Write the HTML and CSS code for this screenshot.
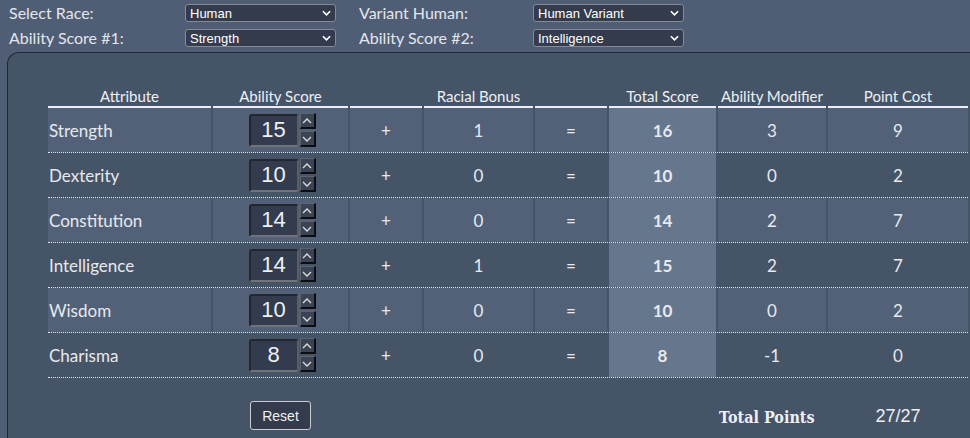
FILE: index.html
```html
<!DOCTYPE html>
<html>
<head>
<meta charset="utf-8">
<link rel="stylesheet" href="styles.css">
</head>
<body>
<div class="top">
  <div class="lbl">Select Race:</div>
  <div class="cell"><div class="select"><span>Human</span><svg class="chev" viewBox="0 0 10 6" width="10" height="6"><path d="M1 1 L5 5 L9 1" fill="none" stroke="#fff" stroke-width="1.8"/></svg></div></div>
  <div class="lbl">Variant Human:</div>
  <div class="cell"><div class="select"><span>Human Variant</span><svg class="chev" viewBox="0 0 10 6" width="10" height="6"><path d="M1 1 L5 5 L9 1" fill="none" stroke="#fff" stroke-width="1.8"/></svg></div></div>
  <div class="lbl">Ability Score #1:</div>
  <div class="cell"><div class="select"><span>Strength</span><svg class="chev" viewBox="0 0 10 6" width="10" height="6"><path d="M1 1 L5 5 L9 1" fill="none" stroke="#fff" stroke-width="1.8"/></svg></div></div>
  <div class="lbl">Ability Score #2:</div>
  <div class="cell"><div class="select"><span>Intelligence</span><svg class="chev" viewBox="0 0 10 6" width="10" height="6"><path d="M1 1 L5 5 L9 1" fill="none" stroke="#fff" stroke-width="1.8"/></svg></div></div>
</div>

<div class="panel">
  <div class="grid head">
    <div>Attribute</div><div>Ability Score</div><div></div><div>Racial Bonus</div><div></div><div>Total Score</div><div>Ability Modifier</div><div>Point Cost</div>
  </div>

  <div class="grid row stripe">
    <div class="name">Strength</div>
    <div class="spin"><div class="box">15</div><div class="btns"><div class="b"><svg viewBox="0 0 10 6" width="10" height="6"><path d="M1 5 L5 1 L9 5" fill="none" stroke="#ddd" stroke-width="1.3"/></svg></div><div class="b"><svg viewBox="0 0 10 6" width="10" height="6"><path d="M1 1 L5 5 L9 1" fill="none" stroke="#ddd" stroke-width="1.3"/></svg></div></div></div>
    <div>+</div><div>1</div><div>=</div><div class="tot">16</div><div>3</div><div>9</div>
  </div>

  <div class="grid row">
    <div class="name">Dexterity</div>
    <div class="spin"><div class="box">10</div><div class="btns"><div class="b"><svg viewBox="0 0 10 6" width="10" height="6"><path d="M1 5 L5 1 L9 5" fill="none" stroke="#ddd" stroke-width="1.3"/></svg></div><div class="b"><svg viewBox="0 0 10 6" width="10" height="6"><path d="M1 1 L5 5 L9 1" fill="none" stroke="#ddd" stroke-width="1.3"/></svg></div></div></div>
    <div>+</div><div>0</div><div>=</div><div class="tot">10</div><div>0</div><div>2</div>
  </div>

  <div class="grid row stripe">
    <div class="name">Constitution</div>
    <div class="spin"><div class="box">14</div><div class="btns"><div class="b"><svg viewBox="0 0 10 6" width="10" height="6"><path d="M1 5 L5 1 L9 5" fill="none" stroke="#ddd" stroke-width="1.3"/></svg></div><div class="b"><svg viewBox="0 0 10 6" width="10" height="6"><path d="M1 1 L5 5 L9 1" fill="none" stroke="#ddd" stroke-width="1.3"/></svg></div></div></div>
    <div>+</div><div>0</div><div>=</div><div class="tot">14</div><div>2</div><div>7</div>
  </div>

  <div class="grid row">
    <div class="name">Intelligence</div>
    <div class="spin"><div class="box">14</div><div class="btns"><div class="b"><svg viewBox="0 0 10 6" width="10" height="6"><path d="M1 5 L5 1 L9 5" fill="none" stroke="#ddd" stroke-width="1.3"/></svg></div><div class="b"><svg viewBox="0 0 10 6" width="10" height="6"><path d="M1 1 L5 5 L9 1" fill="none" stroke="#ddd" stroke-width="1.3"/></svg></div></div></div>
    <div>+</div><div>1</div><div>=</div><div class="tot">15</div><div>2</div><div>7</div>
  </div>

  <div class="grid row stripe">
    <div class="name">Wisdom</div>
    <div class="spin"><div class="box">10</div><div class="btns"><div class="b"><svg viewBox="0 0 10 6" width="10" height="6"><path d="M1 5 L5 1 L9 5" fill="none" stroke="#ddd" stroke-width="1.3"/></svg></div><div class="b"><svg viewBox="0 0 10 6" width="10" height="6"><path d="M1 1 L5 5 L9 1" fill="none" stroke="#ddd" stroke-width="1.3"/></svg></div></div></div>
    <div>+</div><div>0</div><div>=</div><div class="tot">10</div><div>0</div><div>2</div>
  </div>

  <div class="grid row">
    <div class="name">Charisma</div>
    <div class="spin"><div class="box">8</div><div class="btns"><div class="b"><svg viewBox="0 0 10 6" width="10" height="6"><path d="M1 5 L5 1 L9 5" fill="none" stroke="#ddd" stroke-width="1.3"/></svg></div><div class="b"><svg viewBox="0 0 10 6" width="10" height="6"><path d="M1 1 L5 5 L9 1" fill="none" stroke="#ddd" stroke-width="1.3"/></svg></div></div></div>
    <div>+</div><div>0</div><div>=</div><div class="tot">8</div><div>-1</div><div>0</div>
  </div>

  <div class="grid foot">
    <div></div>
    <div class="center"><button class="reset">Reset</button></div>
    <div></div><div></div><div></div><div></div>
    <div class="tp">Total Points</div>
    <div class="pts">27/27</div>
  </div>
</div>
</body>
</html>
```

FILE: styles.css
```css
html, body {
  margin: 0;
  padding: 0;
  background: #4f5d75;
  overflow: hidden;
}
body {
  font-family: Lato, "Open Sans", sans-serif;
  color: #e6e9ee;
  height: 438px;
}
.top {
  display: grid;
  grid-template-columns: 176px 174px 174px 151px;
  grid-template-rows: 18px 18px;
  row-gap: 7px;
  padding: 4px 0 0 9px;
}
.lbl {
  font-size: 16px;
  line-height: 18px;
  color: #e3e6eb;
}
.cell {
  display: flex;
}
.select {
  box-sizing: border-box;
  width: 151px;
  height: 18px;
  border: 1px solid #858a93;
  border-radius: 3px;
  background: #333b4d;
  display: flex;
  align-items: center;
  justify-content: space-between;
  padding: 0 4px 0 4px;
  font-family: "Liberation Sans", Arial, sans-serif;
  font-size: 13px;
  color: #fff;
}
.chev {
  display: block;
  width: 9px;
  height: 6px;
}
.panel {
  margin: 5px 0 0 7px;
  border: 1px solid #1e283a;
  border-right: none;
  border-bottom: none;
  border-radius: 12px 0 0 0;
  background: #465468;
  height: 352px;
  padding: 33px 0 0 40px;
}
.grid {
  display: grid;
  grid-template-columns: 163px 135px 72px 109px 72px 107px 108px 140px;
  column-gap: 2px;
  width: 920px;
}
.head > div {
  font-size: 15px;
  line-height: 20px;
  text-align: center;
  border-bottom: 2px solid #eceef1;
  color: #eef0f3;
  white-space: nowrap;
}
.row {
  height: 45px;
  box-sizing: border-box;
  border-bottom: 1px dotted #e3e6ea;
  font-size: 17px;
}
.row > div {
  display: flex;
  align-items: center;
  justify-content: center;
}
.row > .name {
  justify-content: flex-start;
  padding-left: 1px;
}
.stripe > div {
  background: #536178;
}
.row > .tot, .stripe > .tot {
  background: #66778d;
  font-weight: 700;
}
.spin {
  gap: 1px;
  padding-left: 3px;
}
.box {
  box-sizing: border-box;
  width: 50px;
  height: 33px;
  background: #333c4e;
  border: 2px solid #22262d;
  border-bottom-color: #70737a;
  border-right-color: #5a5e66;
  border-radius: 3px;
  display: flex;
  align-items: center;
  justify-content: center;
  font-family: "Liberation Sans", Arial, sans-serif;
  font-size: 22px;
  color: #eef0f3;
}
.btns {
  display: flex;
  flex-direction: column;
  gap: 2px;
}
.b {
  box-sizing: border-box;
  width: 16px;
  height: 16px;
  background: #3b4455;
  border: 1px solid #5c6470;
  border-right: 2px solid #0b0d10;
  border-bottom: 2px solid #0b0d10;
  display: flex;
  align-items: center;
  justify-content: center;
}
.b svg {
  display: block;
}
.foot {
  margin-top: 23px;
  height: 29px;
}
.foot > div {
  display: flex;
  align-items: center;
}
.center {
  justify-content: center;
}
.reset {
  width: 61px;
  height: 29px;
  background: #333b4d;
  border: 1px solid #c9ccd1;
  border-radius: 3px;
  color: #eef0f3;
  font-family: "Liberation Sans", Arial, sans-serif;
  font-size: 14px;
  padding: 0;
}
.tp {
  font-family: "DejaVu Serif", serif;
  font-weight: 700;
  font-size: 16px;
  font-stretch: condensed;
  color: #eef0f3;
  white-space: nowrap;
  padding-left: 1px;
  padding-top: 4px;
}
.pts {
  justify-content: center;
  font-family: "Liberation Sans", Arial, sans-serif;
  font-size: 18px;
  color: #eef0f3;
  padding-top: 2px;
}
```
